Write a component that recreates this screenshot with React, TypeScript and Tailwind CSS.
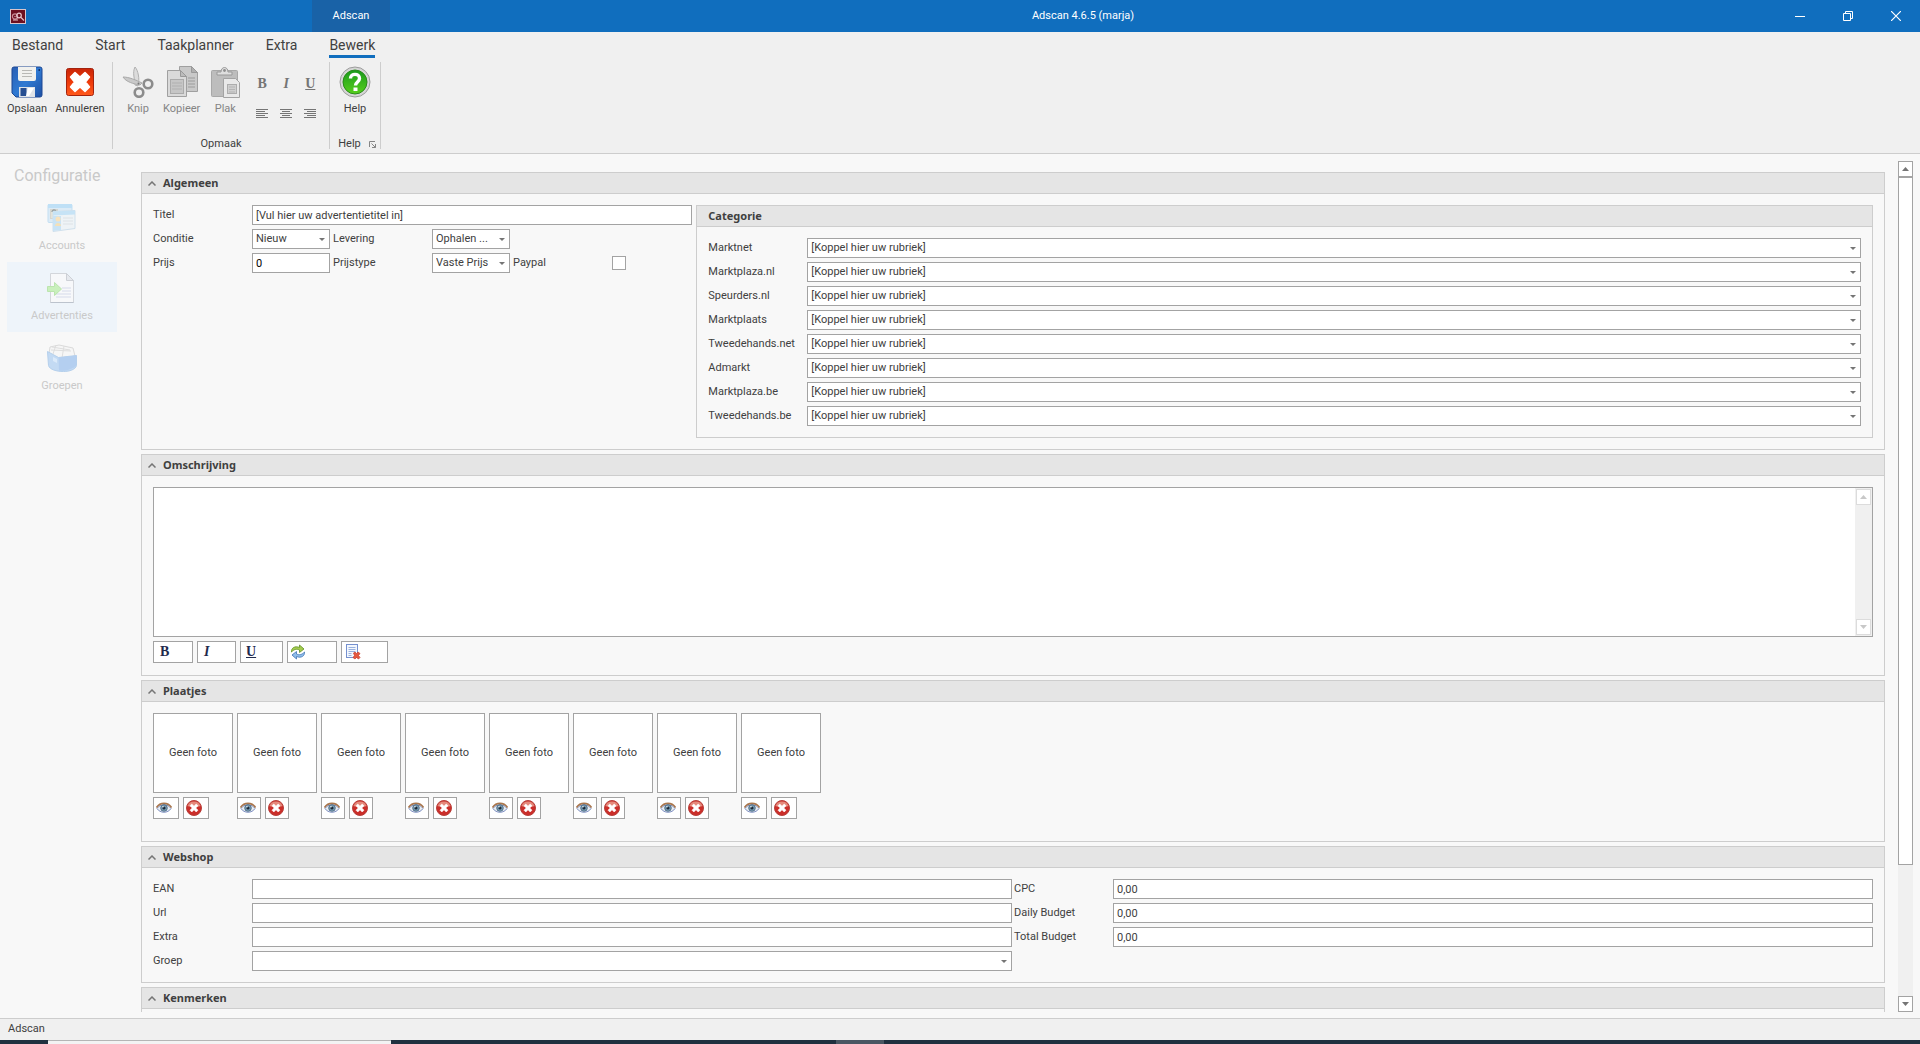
import React, { useState } from "react";

const fotos = [1, 2, 3, 4, 5, 6, 7, 8];
const rubrieken = [
    "Marktnet",
    "Marktplaza.nl",
    "Speurders.nl",
    "Marktplaats",
    "Tweedehands.net",
    "Admarkt",
    "Marktplaza.be",
    "Tweedehands.be",
];

const field = "h-5 w-full border border-[#a3a3a3] bg-white pl-[3px] text-[11px] outline-none";
const bold = "font-['Noto_Sans',sans-serif] font-bold";

/* ---------- icons ---------- */

const AppIcon = () => (
    <svg width="16" height="15" viewBox="0 0 16 15" className="block">
        <rect x="0.5" y="0.5" width="15" height="14" fill="#6d0f1f" stroke="#d9c4cb" />
        <circle cx="5" cy="7.5" r="2.6" fill="none" stroke="#c98a95" strokeWidth="1.2" />
        <circle cx="5" cy="7.5" r="0.8" fill="#c98a95" />
        <circle cx="9" cy="6.5" r="2.3" fill="none" stroke="#e6c6cc" strokeWidth="1.2" />
        <path d="M10.500 8l3.500 3.500M3 11h5" stroke="#e3bfc6" strokeWidth="1.200" />
    </svg>
);

const SaveIcon = () => (
    <svg width="32" height="32" viewBox="0 0 32 32" className="block">
        <defs>
            <linearGradient id="disk" x1="0" y1="0" x2="1" y2="1">
                <stop offset="0" stopColor="#2a5fb4" />
                <stop offset="0.5" stopColor="#2f79d2" />
                <stop offset="1" stopColor="#1d4fa3" />
            </linearGradient>
        </defs>
        <path d="M3 1h26a2 2 0 0 1 2 2v26a2 2 0 0 1-2 2H5l-4-4V3a2 2 0 0 1 2-2z" fill="url(#disk)" stroke="#1c4793" />
        <path d="M7 1h18v12a2 2 0 0 1-2 2H9a2 2 0 0 1-2-2z" fill="#f1f1ee" />
        <path d="M11 4.500h10M11 7.500h10M11 10.500h10" stroke="#b9b9b5" />
        <path d="M27.500 3h1.500v2h-1.500z" fill="#12356f" />
        <path d="M8 21h16v10H8z" fill="#dfe3e8" />
        <path d="M9.500 22h6v8h-6z" fill="#274f92" />
        <path d="M17 22h6l-5 8h-3z" fill="#fff" />
    </svg>
);

const CancelIcon = () => (
    <svg width="32" height="32" viewBox="0 0 32 32" className="block">
        <defs>
            <linearGradient id="cancel" x1="0" y1="0" x2="0" y2="1">
                <stop offset="0" stopColor="#c92508" />
                <stop offset="0.5" stopColor="#ee3a0a" />
                <stop offset="1" stopColor="#ff5a1c" />
            </linearGradient>
        </defs>
        <rect x="2.500" y="2.500" width="27" height="27" rx="2" fill="url(#cancel)" stroke="#a3230e" />
        <path
            d="M11 6.500l5 4.500 5-4.500 4.500 4.500-4 5 4 5-4.500 4.500-5-4.500-5 4.500L6.500 21l4-5-4-5z"
            fill="#fff"
            stroke="#fff"
            strokeWidth="1.500"
            strokeLinejoin="round"
        />
    </svg>
);

const CutIcon = () => (
    <svg width="32" height="32" viewBox="0 0 32 32" className="block">
        <path d="M13 1c3 3 5 12 3 19l-3-1c0-6-3-12 0-18z" fill="#dcdcdc" stroke="#b0b0b0" />
        <path d="M1 11c6 0 13 3 19 6l-2 2C12 18 4 16 1 11z" fill="#c9c9c9" stroke="#a9a9a9" />
        <circle cx="26" cy="18" r="4.300" fill="none" stroke="#8c8c8c" strokeWidth="2.600" />
        <circle cx="17" cy="26.500" r="4.300" fill="none" stroke="#8c8c8c" strokeWidth="2.600" />
        <circle cx="16.500" cy="17.500" r="1" fill="#777" />
    </svg>
);

const CopyIcon = () => (
    <svg width="32" height="32" viewBox="0 0 32 32" className="block">
        <path d="M13.500 0.500h12l6 6v19h-18z" fill="#c9c9c9" stroke="#a0a0a0" />
        <path d="M25.500 0.500v6h6z" fill="#b0b0b0" stroke="#999" />
        <path d="M22 12h7M22 15h7M22 18h7M22 21h7" stroke="#ababab" strokeWidth="1.500" />
        <path d="M1.500 4.500h13l6 6v20h-19z" fill="#dadada" stroke="#a0a0a0" />
        <path d="M14.500 4.500v6h6z" fill="#bcbcbc" stroke="#999" />
        <rect x="4.500" y="13.500" width="13" height="14" fill="#c6c6c6" stroke="#ababab" />
        <path d="M6 17h10M6 20h10M6 23h10" stroke="#b0b0b0" />
    </svg>
);

const PasteIcon = () => (
    <svg width="32" height="32" viewBox="0 0 32 32" className="block">
        <rect x="2.500" y="4.500" width="26" height="26" rx="1" fill="#bdbdbd" stroke="#a8a8a8" />
        <path d="M8 9V6h4c0-6 7-6 7 0h4v3z" fill="#dedede" stroke="#999" />
        <circle cx="15.500" cy="4.500" r="1.400" fill="#8e8e8e" />
        <path d="M14.500 12.500h12l4 4v15h-16z" fill="#e9e9e9" stroke="#a3a3a3" />
        <rect x="18.500" y="18.500" width="9" height="9" fill="#cfcfcf" stroke="#adadad" />
        <path d="M20 21h6M20 23.500h6M20 26h6" stroke="#b5b5b5" />
    </svg>
);

const HelpIcon = () => (
    <svg width="32" height="32" viewBox="0 0 32 32" className="block">
        <defs>
            <linearGradient id="help" x1="0" y1="0" x2="0" y2="1">
                <stop offset="0" stopColor="#199a1c" />
                <stop offset="1" stopColor="#57cf1c" />
            </linearGradient>
        </defs>
        <circle cx="16" cy="16" r="15" fill="#d6d6d6" stroke="#9c9c9c" />
        <circle cx="16" cy="16" r="12" fill="url(#help)" stroke="#2a8a1b" />
        <path
            d="M11.500 12.500c0-5.500 9-5.500 9 0 0 3.500-4 3.500-4 7"
            fill="none"
            stroke="#fff"
            strokeWidth="3.400"
        />
        <rect x="14.500" y="21.500" width="4" height="3.500" fill="#fff" />
    </svg>
);

const AccountsIcon = () => (
    <svg width="32" height="32" viewBox="0 0 32 32" className="block">
        <rect x="2" y="2.500" width="24" height="18" rx="1" fill="#dcebf6" stroke="#c3dff2" />
        <path d="M2 2h24v4H2z" fill="#bfe0f6" />
        <rect x="4.500" y="7.500" width="7" height="9" fill="#e3e3da" stroke="#d6d6d0" />
        <path d="M6 10c0-2 3-3 4-1" stroke="#9aa3a5" strokeWidth="1.500" fill="none" />
        <path d="M7 9.500l22-1v18l-22 3z" fill="#eef3f6" stroke="#d0e0ec" />
        <path d="M7 9.500l22-1v4l-22 1z" fill="#c6e3f6" />
        <path d="M7 14h8v14l-8 1z" fill="#c9e3f5" />
        <circle cx="12" cy="17" r="2.500" fill="#f8e2bc" />
        <path d="M9 24c0-4 6-4 6 0z" fill="#f3e0b8" />
        <path d="M17 16h10M17 19h10M17 22h10" stroke="#dde2e6" />
    </svg>
);

const AdvertentiesIcon = () => (
    <svg width="32" height="32" viewBox="0 0 32 32" className="block">
        <path d="M4.500 1.500h16l7 7v22h-23z" fill="#f7f8fa" stroke="#d3d6db" />
        <path d="M20.500 1.500v7h7z" fill="#e6e9ee" stroke="#cdd0d6" />
        <path d="M16 16h9M16 19h9M10 22h15M10 25h15" stroke="#e6e9f2" strokeWidth="2" />
        <path d="M4.500 30.500h23" stroke="#bcc3cd" />
        <path d="M1.500 14.500h7v-4l7 6.500-7 6.500v-4h-7z" fill="#c9f0bc" stroke="#bbe4ae" />
    </svg>
);

const GroepenIcon = () => (
    <svg width="32" height="32" viewBox="0 0 32 32" className="block">
        <path d="M4 5l9-2 14 3 2 8-14 4L3 12z" fill="#f6f6f6" stroke="#dadada" />
        <path d="M5 8l20 1M6 5l18 3M10 3l-3 9M18 4l-2 12" stroke="#dedede" />
        <path d="M1.500 9.500l11 6 18-2v10c-1 4-7 6-13 6-7 0-14-2-15-6z" fill="#c3daf3" stroke="#b5d0ec" />
        <path d="M12.500 15.500l18-2-.5 10c-3 4-12 6-17 5z" fill="#b4cff0" />
        <path d="M7 15l4 2v4l-4-2z" fill="#dbeafa" />
    </svg>
);

const AlignIcon = ({ path }: { path: string }) => (
    <svg width="12" height="10" viewBox="0 0 12 10" className="block" shapeRendering="crispEdges">
        <path d={path} stroke="#757575" />
    </svg>
);

const EyeIcon = () => (
    <svg width="16" height="12" viewBox="0 0 16 12" className="block">
        <path d="M1 6.500C4 1.500 12 1.500 15 6.500c-3 5-11 5-14 0z" fill="#e9eef2" stroke="#7e8fc2" />
        <path d="M0.500 5.500C4 0 12 0 15.500 5.500" fill="none" stroke="#a9764c" strokeWidth="1.600" />
        <circle cx="8" cy="6" r="3.300" fill="#7ba0b8" stroke="#42617a" strokeWidth="0.800" />
        <circle cx="8" cy="6" r="1.600" fill="#1d2a38" />
        <circle cx="7" cy="4.800" r="0.700" fill="#fff" />
    </svg>
);

const DeleteIcon = () => (
    <svg width="16" height="16" viewBox="0 0 16 16" className="block">
        <circle cx="8" cy="8" r="7.500" fill="#cb2e2a" stroke="#b8403b" />
        <path d="M1.500 6a7 7 0 0 1 13 0C11 7.500 5 7.500 1.500 6z" fill="#e58a7c" />
        <path
            d="M5.800 4L8 6.200 10.200 4 12 5.800 9.800 8l2.200 2.200-1.800 1.800L8 9.800 5.800 12 4 10.200 6.200 8 4 5.800z"
            fill="#fff"
            stroke="#fff"
            strokeWidth="0.600"
            strokeLinejoin="round"
        />
    </svg>
);

const RefreshIcon = () => (
    <svg width="16" height="16" viewBox="0 0 16 16" className="block">
        <path d="M1.500 8C1 4 5 1.500 9.500 3.500V1L14 5 9.500 8.500V6C6.500 4.500 4 5.500 1.500 8z" fill="#a5cc4f" stroke="#5f8f22" strokeWidth="0.800" />
        <path d="M14.500 8c.5 4-3.500 6.500-8 4.500V15L2 11l4.500-3.500V10c3 1.500 5.500.5 8-2z" fill="#8fbdea" stroke="#3f74b4" strokeWidth="0.800" />
    </svg>
);

const ClearIcon = () => (
    <svg width="16" height="16" viewBox="0 0 16 16" className="block">
        <rect x="1.500" y="0.500" width="11" height="13" fill="#f3f7fd" stroke="#7590cf" />
        <path d="M3.500 3.500h7M3.500 5.500h7M3.500 7.500h7M3.500 9.500h3M3.500 11.500h3" stroke="#8fa9dc" strokeWidth="0.900" />
        <path d="M8.500 9l1.500-1 1.500 1.500L13 8l2 1.500-1.500 2L15 13.500 13.500 15 11.500 13.500 10 15l-2-1.500 1.500-2z" fill="#e4583f" stroke="#c53a2a" strokeWidth="0.700" />
    </svg>
);

const Arrow = ({ up, muted }: { up?: boolean; muted?: boolean }) => (
    <svg width="7" height="4" viewBox="0 0 7 4" className={muted ? "block fill-[#c8c8c8]" : "block fill-[#757575]"}>
        <path d={up ? "M0 4L3.500 0 7 4z" : "M0 0L3.500 4 7 0z"} />
    </svg>
);

/* ---------- form parts ---------- */

interface RowProps {
    id: string;
    label: string;
    children: React.ReactNode;
}

const Row = ({ id, label, children }: RowProps) => (
    <div className="flex h-5 items-center">
        <label htmlFor={id} className="w-[99px] shrink-0">
            {label}
        </label>
        {children}
    </div>
);

const Select = ({ id, value, className = "w-full" }: { id: string; value: string; className?: string }) => (
    <div className={`relative shrink ${className}`}>
        <select id={id} className={`${field} block appearance-none`}>
            <option>{value}</option>
        </select>
        <svg width="6" height="3" viewBox="0 0 6 3" className="pointer-events-none absolute top-[9px] right-[5px] fill-[#757575]">
            <path d="M0 0h6L3 3z" />
        </svg>
    </div>
);

interface PanelProps {
    title: string;
    bodyClass?: string;
    children?: React.ReactNode;
}

const Panel = ({ title, bodyClass = "p-[11px]", children }: PanelProps) => {
    const [open, setOpen] = useState(true);

    return (
        <section className="shrink-0 border border-[#cdcdcd]">
            <button
                type="button"
                onClick={() => setOpen(!open)}
                className={`${bold} flex h-[21px] w-full items-center gap-[7px] border-b border-[#cdcdcd] bg-[#e5e5e5] pl-[6px] text-left`}>
                <svg width="8" height="5" viewBox="0 0 8 5" fill="none" stroke="#757575" strokeWidth="1.500">
                    <path d={open ? "M0.500 4.500L4 1l3.500 3.500" : "M0.500 0.500L4 4 7.500 0.500"} />
                </svg>
                {title}
            </button>
            {open ? <div className={bodyClass}>{children}</div> : null}
        </section>
    );
};

const RibbonButton = ({ label, disabled, children }: { label: string; disabled?: boolean; children: React.ReactNode }) => (
    <button
        type="button"
        disabled={disabled}
        className="flex flex-col items-center gap-[3px] text-[#404040] disabled:text-[#858585]">
        {children}
        <span className="leading-4">{label}</span>
    </button>
);

const TitleBar = () => (
    <header className="flex h-8 shrink-0 items-center bg-[#106ebe] text-white">
        <div className="w-[312px] shrink-0 pl-[10px]">
            <AppIcon />
        </div>
        <div className="flex h-8 w-[78px] shrink-0 items-center justify-center bg-[#1962a7]">Adscan</div>
        <h1 className="grow text-center">Adscan 4.6.5 (marja)</h1>
        <div className="flex w-[144px] shrink-0">
            <button type="button" aria-label="Minimaliseren" className="flex h-8 w-12 items-center justify-center">
                <svg width="10" height="10" viewBox="0 0 10 10" stroke="#fff">
                    <path d="M0 5.500h10" />
                </svg>
            </button>
            <button type="button" aria-label="Vorig formaat" className="flex h-8 w-12 items-center justify-center">
                <svg width="10" height="10" viewBox="0 0 10 10" fill="none" stroke="#fff">
                    <path d="M0.500 2.500h7v7h-7zM2.500 2.500v-2h7v7h-2" />
                </svg>
            </button>
            <button type="button" aria-label="Sluiten" className="flex h-8 w-12 items-center justify-center">
                <svg width="10" height="10" viewBox="0 0 10 10" stroke="#fff" strokeWidth="1.200">
                    <path d="M0 0l10 10M10 0L0 10" />
                </svg>
            </button>
        </div>
    </header>
);

const Ribbon = () => (
    <div className="shrink-0 border-b border-[#cdcdcd] bg-[#f0f0f0]">
        <nav className="flex h-[30px] gap-8 pt-[3px] pl-3 text-[14px] leading-5 text-[#404040]">
            <a href="#bestand" className="h-[23px]">Bestand</a>
            <a href="#start" className="h-[23px]">Start</a>
            <a href="#taakplanner" className="h-[23px]">Taakplanner</a>
            <a href="#extra" className="h-[23px]">Extra</a>
            <a href="#bewerk" className="h-[23px] border-b-[3px] border-[#106ebe]">Bewerk</a>
        </nav>
        <div className="flex h-[91px]">
            <div className="mb-1 flex w-[113px] gap-2 border-r border-[#cdcdcd] pt-1 pl-[7px]">
                <RibbonButton label="Opslaan">
                    <SaveIcon />
                </RibbonButton>
                <RibbonButton label="Annuleren">
                    <CancelIcon />
                </RibbonButton>
            </div>
            <div className="mb-1 flex w-[217px] flex-col justify-between border-r border-[#cdcdcd] pt-1">
                <div className="flex pl-[9px]">
                    <div className="flex gap-[9px]">
                        <RibbonButton label="Knip" disabled>
                            <CutIcon />
                        </RibbonButton>
                        <RibbonButton label="Kopieer" disabled>
                            <CopyIcon />
                        </RibbonButton>
                        <RibbonButton label="Plak" disabled>
                            <PasteIcon />
                        </RibbonButton>
                    </div>
                    <div className="ml-[9px] grid h-[60px] grid-cols-3 font-['Liberation_Serif',serif] text-[14px] font-bold text-[#757575]">
                        <button type="button" className="w-6">B</button>
                        <button type="button" className="w-6 italic">I</button>
                        <button type="button" className="w-6 underline">U</button>
                        <button type="button" aria-label="Links uitlijnen" className="flex items-center justify-center">
                            <AlignIcon path="M0 .5h12M0 2.500h9M0 4.500h12M0 6.500h9M0 8.500h12" />
                        </button>
                        <button type="button" aria-label="Centreren" className="flex items-center justify-center">
                            <AlignIcon path="M0 .5h12M2 2.500h8M0 4.500h12M2 6.500h8M0 8.500h12" />
                        </button>
                        <button type="button" aria-label="Rechts uitlijnen" className="flex items-center justify-center">
                            <AlignIcon path="M0 .5h12M3 2.500h9M0 4.500h12M3 6.500h9M0 8.500h12" />
                        </button>
                    </div>
                </div>
                <span className="self-center leading-[10px]">Opmaak</span>
            </div>
            <div className="mb-1 flex w-[51px] flex-col items-center justify-between border-r border-[#cdcdcd] pt-1">
                <RibbonButton label="Help">
                    <HelpIcon />
                </RibbonButton>
                <span className="flex items-center gap-2 pl-1 leading-[10px]">
                    Help
                    <svg width="7" height="7" viewBox="0 0 7 7" fill="none" stroke="#858585">
                        <path d="M0.500 6V0.500H6M2.500 2.500l4 4M6.500 3v3.500H3" />
                    </svg>
                </span>
            </div>
        </div>
    </div>
);

const sideItems = [
    { label: "Accounts", icon: <AccountsIcon />, active: false },
    { label: "Advertenties", icon: <AdvertentiesIcon />, active: true },
    { label: "Groepen", icon: <GroepenIcon />, active: false },
];

const Sidebar = () => (
    <aside className="w-[141px] shrink-0 pt-2 pr-[24px] pl-[7px] text-[#c9c9c9]">
        <h2 className="h-[30px] pl-[7px] text-[16px] leading-7">Configuratie</h2>
        {sideItems.map((item) => (
            <button
                key={item.label}
                type="button"
                className={`flex h-[70px] w-full flex-col items-center gap-1 pt-[10px] ${item.active ? "bg-[#eef4fa]" : ""}`}>
                {item.icon}
                <span className="leading-4">{item.label}</span>
            </button>
        ))}
    </aside>
);

const Algemeen = () => (
    <Panel title="Algemeen">
        <div className="grid grid-cols-[11fr_24fr] gap-1">
            <div className="flex flex-col gap-1">
                <Row id="titel" label="Titel">
                    <input id="titel" type="text" className={field} defaultValue="[Vul hier uw advertentietitel in]" />
                </Row>
                <div className="flex gap-[3px]">
                    <Row id="conditie" label="Conditie">
                        <Select id="conditie" value="Nieuw" className="w-[78px]" />
                    </Row>
                    <Row id="levering" label="Levering">
                        <Select id="levering" value="Ophalen ..." className="w-[78px]" />
                    </Row>
                </div>
                <div className="flex gap-[3px]">
                    <Row id="prijs" label="Prijs">
                        <div className="w-[78px]">
                            <input id="prijs" type="text" className={`${field} text-black`} defaultValue="0" />
                        </div>
                    </Row>
                    <Row id="prijstype" label="Prijstype">
                        <Select id="prijstype" value="Vaste Prijs" className="w-[78px]" />
                    </Row>
                    <Row id="paypal" label="Paypal">
                        <input
                            id="paypal"
                            type="checkbox"
                            className="size-[14px] appearance-none border border-[#a3a3a3] bg-white checked:bg-[#106ebe]"
                        />
                    </Row>
                </div>
            </div>
            <section className="border border-[#cdcdcd]">
                <h3 className={`${bold} flex h-[21px] items-center border-b border-[#cdcdcd] bg-[#e5e5e5] pl-[11px]`}>
                    Categorie
                </h3>
                <div className="flex flex-col gap-1 p-[11px]">
                    {rubrieken.map((naam) => (
                        <Row key={naam} id={naam} label={naam}>
                            <Select id={naam} value="[Koppel hier uw rubriek]" />
                        </Row>
                    ))}
                </div>
            </section>
        </div>
    </Panel>
);

const editButton = "flex h-[22px] items-center border border-[#a3a3a3] bg-white";
const letter = "font-['Liberation_Serif',serif] text-[14px] leading-4 font-bold text-[#1f2a4d]";

const Omschrijving = () => (
    <Panel title="Omschrijving" bodyClass="px-[11px] pt-[11px] pb-3">
        <div className="flex h-[150px] border border-[#a3a3a3] bg-white">
            <textarea aria-label="Omschrijving" className="grow resize-none p-1 outline-none" />
            <div className="flex w-[17px] shrink-0 flex-col justify-between bg-[#f0f0f0] p-px">
                <div className="flex h-4 items-center justify-center border border-[#dcdcdc] bg-white">
                    <Arrow up muted />
                </div>
                <div className="flex h-4 items-center justify-center border border-[#dcdcdc] bg-white">
                    <Arrow muted />
                </div>
            </div>
        </div>
        <div className="mt-1 flex gap-1">
            <button type="button" className={`${editButton} ${letter} w-10 pl-[6px]`}>B</button>
            <button type="button" className={`${editButton} ${letter} w-[39px] pl-[6px] italic`}>I</button>
            <button type="button" className={`${editButton} ${letter} w-[43px] pl-[5px] underline`}>U</button>
            <button type="button" aria-label="Vernieuwen" className={`${editButton} w-[50px] pl-[2px]`}>
                <RefreshIcon />
            </button>
            <button type="button" aria-label="Opmaak wissen" className={`${editButton} w-[47px] pl-[3px]`}>
                <ClearIcon />
            </button>
        </div>
    </Panel>
);

const Plaatjes = () => (
    <Panel title="Plaatjes" bodyClass="px-[11px] pt-[11px] pb-[22px]">
        <div className="flex gap-1">
            {fotos.map((n) => {
                const width = n === 1 || n === fotos.length ? "w-[26px]" : "w-6";
                return (
                    <div key={n} className="w-20">
                        <div className="flex h-20 items-center justify-center border border-[#a3a3a3] bg-white">
                            Geen foto
                        </div>
                        <div className="mt-1 flex gap-1">
                            <button type="button" aria-label={`Bekijk foto ${n}`} className={`${editButton} ${width} pl-[2px]`}>
                                <EyeIcon />
                            </button>
                            <button
                                type="button"
                                aria-label={`Verwijder foto ${n}`}
                                className={`${editButton} ${width} pl-[2px]`}>
                                <DeleteIcon />
                            </button>
                        </div>
                    </div>
                );
            })}
        </div>
    </Panel>
);

const Webshop = () => (
    <Panel title="Webshop">
        <div className="grid grid-cols-2 gap-0.5">
            <div className="flex flex-col gap-1">
                <Row id="ean" label="EAN">
                    <input id="ean" type="text" className={field} />
                </Row>
                <Row id="url" label="Url">
                    <input id="url" type="text" className={field} />
                </Row>
                <Row id="extra" label="Extra">
                    <input id="extra" type="text" className={field} />
                </Row>
                <Row id="groep" label="Groep">
                    <Select id="groep" value="" />
                </Row>
            </div>
            <div className="flex flex-col gap-1">
                {["CPC", "Daily Budget", "Total Budget"].map((naam) => (
                    <Row key={naam} id={naam} label={naam}>
                        <input id={naam} type="text" className={field} defaultValue="0,00" />
                    </Row>
                ))}
            </div>
        </div>
    </Panel>
);

const ScrollBar = () => (
    <div className="mt-[7px] flex w-[15px] shrink-0 flex-col bg-[#f0f0f0]">
        <button
            type="button"
            aria-label="Omhoog"
            className="flex h-4 shrink-0 items-center justify-center border border-[#a3a3a3] bg-white">
            <Arrow up />
        </button>
        <div className="flex grow flex-col">
            <div className="grow-[84] border border-[#a3a3a3] bg-white" />
            <div className="grow-[16]" />
        </div>
        <button
            type="button"
            aria-label="Omlaag"
            className="flex h-4 shrink-0 items-center justify-center border border-[#a3a3a3] bg-white">
            <Arrow />
        </button>
    </div>
);

export default function App() {
    return (
        <div className="flex h-screen flex-col overflow-hidden bg-[#f8f8f8] font-['Tahoma','Roboto',sans-serif] text-[11px] text-[#404040]">
            <TitleBar />
            <Ribbon />
            <div className="flex min-h-0 grow pr-[7px] pb-[6px]">
                <Sidebar />
                <main className="mr-[13px] flex min-w-0 grow flex-col gap-1 overflow-hidden pt-[18px]">
                    <Algemeen />
                    <Omschrijving />
                    <Plaatjes />
                    <Webshop />
                    <Panel title="Kenmerken" />
                </main>
                <ScrollBar />
            </div>
            <footer className="flex h-[22px] shrink-0 items-center border-t border-[#cdcdcd] bg-[#f0f0f0] pl-2">Adscan</footer>
            <div className="flex h-1 shrink-0 bg-[#20303f]">
                <div className="ml-12 w-[343px] border-t border-[#b5b5b5] bg-[#f3f3f3]" />
                <div className="ml-[445px] w-12 bg-[#4a5763]" />
            </div>
        </div>
    );
}
